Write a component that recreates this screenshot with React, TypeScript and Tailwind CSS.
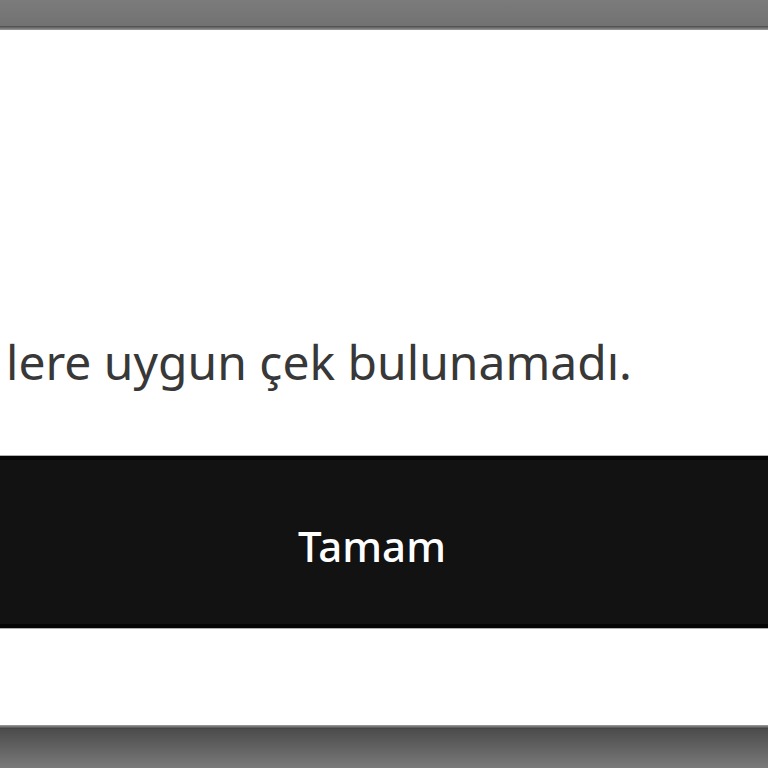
import React from 'react';

const App: React.FC = () => {
  return (
    <div className="w-[768px] h-[768px] overflow-hidden flex flex-col bg-white" style={{ fontFamily: '"Noto Sans", "Open Sans", sans-serif' }}>
      {/* backdrop strip above the dialog */}
      <div className="h-[26px] shrink-0 bg-gradient-to-b from-[#7b7b7b] to-[#727272]" />
      <div className="h-[4px] shrink-0 bg-gradient-to-b from-[#4a4a4a] to-[#9a9a9a]" />

      {/* dialog body */}
      <div className="flex-1 flex flex-col">
        <div className="h-[296px] shrink-0" />
        <p className="h-[72px] shrink-0 pl-[6px] text-[48px] leading-[72px] text-[#383838] whitespace-nowrap">
          lere uygun çek bulunamadı.
        </p>
        <div className="h-[58px] shrink-0" />
        <button className="h-[172px] shrink-0 w-full bg-[#121212] border-y-[4px] border-y-[#050505] shadow-[0_-1px_0_#b0b0b0,0_1px_0_#b0b0b0] flex items-center justify-center">
          <span className="text-[42px] font-medium text-white pr-[24px] pt-[6px]">Tamam</span>
        </button>
        <div className="flex-1" />
      </div>

      {/* backdrop strip below */}
      <div className="h-[4px] shrink-0 bg-gradient-to-b from-[#a0a0a0] to-[#3a3a3a]" />
      <div className="h-[39px] shrink-0 bg-gradient-to-b from-[#4c4c4c] to-[#7a7a7a]" />
    </div>
  );
};

export default App;
